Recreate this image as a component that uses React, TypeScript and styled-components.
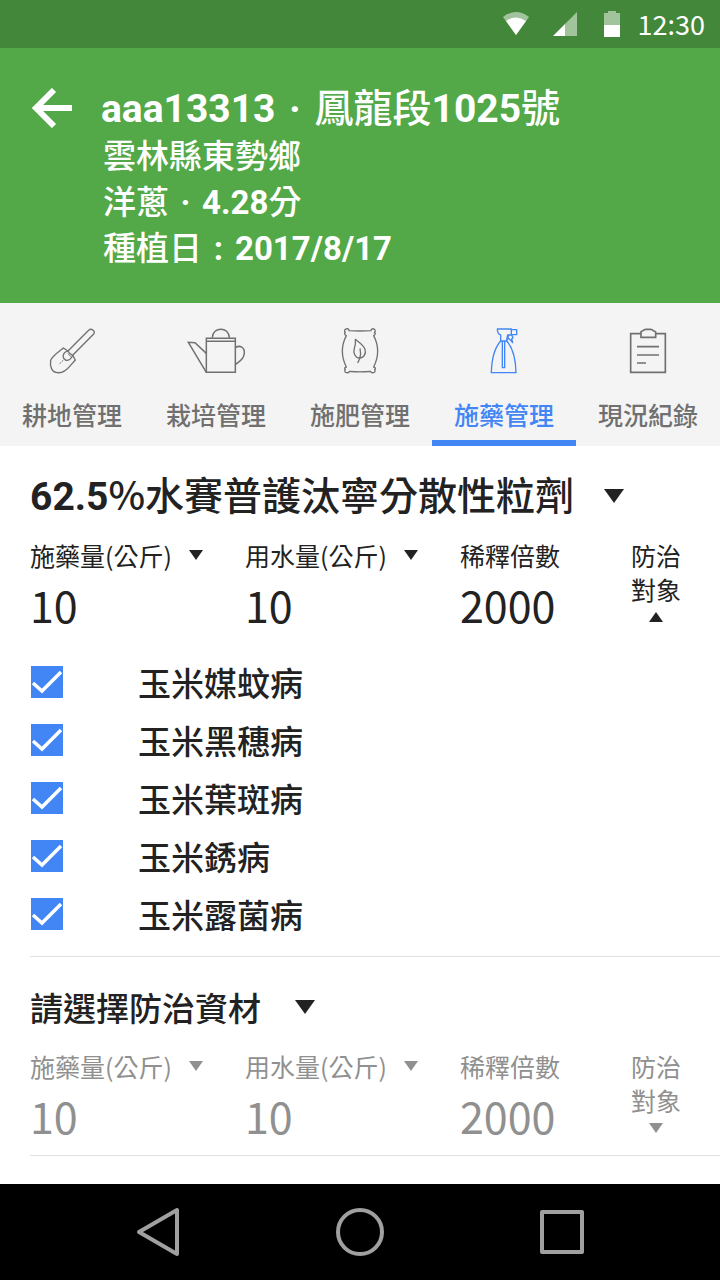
import React, { useState } from "react";
import styled, { createGlobalStyle, css } from "styled-components";

const colors = {
  statusBar: "#43883a",
  header: "#53a848",
  tabs: "#f4f4f4",
  tabText: "#707070",
  accent: "#4285f4",
  text: "#222222",
  muted: "#909090",
  divider: "#e0e0e0",
};

const cjk = `"Noto Sans CJK TC", sans-serif`;
const latinFirst = `Roboto, "Noto Sans CJK TC", sans-serif`;

const GlobalStyle = createGlobalStyle`
  *, *::before, *::after { box-sizing: border-box; }
  body {
    margin: 0;
    background: #ffffff;
    color: ${colors.text};
    font-family: ${cjk};
  }
  button, input, select { font: inherit; color: inherit; }
`;

const plainControl = css`
  appearance: none;
  margin: 0;
  padding: 0;
  border: 0;
  border-radius: 0;
  background: none;
`;

const Screen = styled.div`
  display: flex;
  flex-direction: column;
  min-height: 100vh;
`;

const StatusBar = styled.div`
  display: flex;
  align-items: center;
  justify-content: flex-end;
  height: 48px;
  padding-right: 15px;
  background: ${colors.statusBar};
  color: #ffffff;
  font-size: 27px;
  line-height: 48px;
`;

const StatusIcons = styled.div`
  display: flex;
  align-items: center;
  gap: 24px;
  margin-right: 17px;
  svg { display: block; }
`;

const Header = styled.header`
  display: flex;
  align-items: flex-start;
  gap: 26px;
  padding: 31px 32px 34px 30px;
  background: ${colors.header};
  color: #ffffff;
`;

const BackButton = styled.button`
  ${plainControl}
  display: flex;
  align-items: center;
  height: 58px;
  cursor: pointer;
`;

const HeaderText = styled.div`
  font-size: 33px;
  font-weight: 500;
  line-height: 46px;
`;

const FieldName = styled.h1`
  margin: 0;
  font-size: 39px;
  font-weight: 500;
  line-height: 52px;
`;

const HeaderLine = styled.p`
  margin: 0;
  padding-left: 2px;
`;

const Latin = styled.span`
  font-family: ${latinFirst};
  font-weight: 700;
  line-height: 1;
`;

const Mark = styled(Latin)`
  display: inline-block;
  width: 1em;
  text-align: center;
`;

const TabBar = styled.div`
  display: grid;
  grid-template-columns: repeat(5, 1fr);
  background: ${colors.tabs};
`;

const Tab = styled.button<{ $active: boolean }>`
  ${plainControl}
  display: flex;
  flex-direction: column;
  align-items: center;
  gap: 21px;
  height: 143px;
  padding-top: 24px;
  border-bottom: 6px solid ${(p) => (p.$active ? colors.accent : "transparent")};
  color: ${(p) => (p.$active ? colors.accent : colors.tabText)};
  font-size: 25px;
  font-weight: 500;
  line-height: 36px;
  cursor: pointer;
`;

const Main = styled.main`
  flex: 1;
  padding-left: 30px;
`;

const Section = styled.section<{ $muted?: boolean }>`
  padding-top: 23px;
  padding-bottom: ${(p) => (p.$muted ? 10 : 13)}px;
  border-bottom: 1px solid ${colors.divider};
`;

const ProductButton = styled.button`
  ${plainControl}
  display: flex;
  align-items: center;
  gap: 30px;
  height: 54px;
  font-size: 39px;
  font-weight: 500;
  line-height: 48px;
  cursor: pointer;
`;

const ProductName = styled.span`
  padding-bottom: 6px;
`;

const Picker = styled.span<{ $gap: number }>`
  display: inline-grid;
  align-items: center;
  > select {
    grid-area: 1 / 1;
    padding-right: ${(p) => p.$gap}px;
  }
  > svg {
    grid-area: 1 / 1;
    justify-self: end;
    pointer-events: none;
  }
`;

const ProductSelect = styled.select`
  ${plainControl}
  height: 54px;
  font-size: 33px;
  font-weight: 500;
  cursor: pointer;
`;

const UnitSelect = styled.select`
  ${plainControl}
  height: 34px;
  font-size: 25px;
  cursor: pointer;
`;

const Fields = styled.div<{ $muted?: boolean }>`
  display: grid;
  grid-template-columns: 215fr 215fr 171fr 89fr;
  align-items: start;
  margin-top: 15px;
  color: ${(p) => (p.$muted ? colors.muted : colors.text)};
  font-size: 25px;
  line-height: 34px;
`;

const Field = styled.div`
  display: flex;
  flex-direction: column;
  align-items: flex-start;
  gap: 2px;
  min-width: 0;
`;

const ValueInput = styled.input`
  ${plainControl}
  width: 100%;
  height: 60px;
  font-size: 43px;
`;

const TargetButton = styled.button`
  ${plainControl}
  display: flex;
  flex-direction: column;
  align-items: center;
  justify-self: start;
  gap: 6px;
  line-height: 34px;
  cursor: pointer;
`;

const TargetText = styled.span`
  width: 50px;
`;

const TargetList = styled.ul`
  margin: 0;
  padding: 19px 0 0;
  list-style: none;
`;

const TargetRow = styled.label`
  display: flex;
  align-items: center;
  gap: 75px;
  height: 58px;
  padding-left: 1px;
  font-size: 33px;
  font-weight: 500;
  line-height: 58px;
  cursor: pointer;
`;

const CheckBox = styled.span`
  display: grid;
  > * { grid-area: 1 / 1; }
  > svg { pointer-events: none; }
  > input:not(:checked) + svg { visibility: hidden; }
`;

const CheckInput = styled.input`
  ${plainControl}
  width: 32px;
  height: 32px;
  border: 2px solid ${colors.accent};
  cursor: pointer;
  &:checked { background: ${colors.accent}; }
`;

const NavBar = styled.nav`
  display: flex;
  justify-content: center;
  height: 96px;
  background: #000000;
`;

const NavButton = styled.button`
  ${plainControl}
  display: flex;
  align-items: center;
  justify-content: center;
  width: 28%;
  cursor: pointer;
`;

const Arrow = ({ large, up }: { large?: boolean; up?: boolean }) => (
  <svg width={large ? 20 : 14} height={large ? 14 : 10} viewBox="0 0 14 10" aria-hidden="true" preserveAspectRatio="none">
    <path d={up ? "M0 10 7 0l7 10z" : "M0 0h14L7 10z"} fill="currentColor" />
  </svg>
);

const iconProps = {
  width: 60,
  height: 48,
  fill: "none",
  stroke: "currentColor",
  strokeLinejoin: "round" as const,
  "aria-hidden": true,
};

const ShovelIcon = () => (
  <svg {...iconProps} viewBox="126 80 180 144" strokeWidth="4">
    <path d="M204 152 266 90C273 82 288 92 281 101L218 165" />
    <path d="M204 152 190 143C178 153 158 166 152 180C149 198 155 216 172 217C190 220 202 207 211 196L226 179 218 165" />
    <path d="M204 152C207 158 211 162 218 165C214 176 205 182 196 179C188 175 188 164 193 158C197 154 200 154 204 152Z" />
    <path d="M203 159 213 169" strokeWidth="3" />
    <path d="M196 174 178 191" strokeDasharray="6 3" strokeWidth="3" />
  </svg>
);

const WateringCanIcon = () => (
  <svg {...iconProps} viewBox="558 80 180 144" strokeWidth="4.5" strokeLinejoin="miter">
    <path d="M619 114H706V216H619ZM619 123H706" />
    <path d="M637 112C638 78 687 78 688 112" />
    <path d="M619 159 585 127 565 126 619 216" />
    <path d="M706 142C720 133 734 141 733 158C732 178 716 185 706 193" />
  </svg>
);

const FertilizerIcon = () => (
  <svg {...iconProps} viewBox="120 80 180 144" strokeWidth="4">
    <path d="M177 91Q210 93 243 91C243 85 250 84 253 87C257 90 256 95 253 97C258 98 256 103 251 106Q275 152 251 200C257 202 258 206 254 208C257 213 254 217 250 217C246 218 243 217 242 213Q210 216 178 213C177 217 174 218 170 217C165 217 163 212 166 208C162 206 163 202 169 200Q145 152 169 106C163 103 162 98 166 97C162 93 164 87 168 86C173 84 177 86 177 91Z" />
    <path d="M196 117Q198 132 193 144C189 158 195 171 207 173C222 173 229 160 225 147C220 133 208 127 196 117Z" />
    <path d="M210 144Q214 160 209 175L203 188" />
  </svg>
);

const SprayIcon = () => (
  <svg {...iconProps} viewBox="552 80 180 144" strokeWidth="4">
    <path d="M632 122V104C626 102 622 97 622 86H664V104H653Q651 112 650 122Z" />
    <path d="M664 88H680V103H664M656 104 653 112 662 120 668 127 665 116 669 112 665 104M650 118 657 112" />
    <path d="M632 122C616 140 605 175 604 217H678C677 175 667 140 650 122" />
    <path d="M637 122V202H644V122" />
  </svg>
);

const RecordIcon = () => (
  <svg {...iconProps} viewBox="174 80 180 144" strokeWidth="5" strokeLinejoin="miter">
    <path d="M242 100H212V216H316V100H287" />
    <path d="M243 111V94Q244 92 248 92Q252 87 258 87H271Q277 87 281 92Q286 92 287 95V111Z" />
    <path d="M231 139H297M231 164H297M231 188H258" />
  </svg>
);

const tabs = [
  { name: "耕地管理", Icon: ShovelIcon },
  { name: "栽培管理", Icon: WateringCanIcon },
  { name: "施肥管理", Icon: FertilizerIcon },
  { name: "施藥管理", Icon: SprayIcon },
  { name: "現況紀錄", Icon: RecordIcon },
];

const diseases = ["玉米媒蚊病", "玉米黑穗病", "玉米葉斑病", "玉米銹病", "玉米露菌病"];

type DosageProps = { id: string; muted?: boolean; open: boolean; onToggle: () => void };

const DosageFields = ({ id, muted, open, onToggle }: DosageProps) => (
  <Fields $muted={muted}>
    {["施藥量", "用水量"].map((name) => (
      <Field key={name}>
        <Picker $gap={31}>
          <UnitSelect aria-label={`${name}單位`}>
            <option>{`${name}(公斤)`}</option>
          </UnitSelect>
          <Arrow />
        </Picker>
        <ValueInput aria-label={name} inputMode="numeric" defaultValue="10" />
      </Field>
    ))}
    <Field>
      <label htmlFor={`${id}-ratio`}>稀釋倍數</label>
      <ValueInput id={`${id}-ratio`} inputMode="numeric" defaultValue="2000" />
    </Field>
    <TargetButton type="button" aria-expanded={open} onClick={onToggle}>
      <TargetText>防治對象</TargetText>
      <Arrow up={open} />
    </TargetButton>
  </Fields>
);

const DiseaseList = () => (
  <TargetList>
    {diseases.map((name) => (
      <li key={name}>
        <TargetRow>
          <CheckBox>
            <CheckInput type="checkbox" defaultChecked />
            <svg width="32" height="32" viewBox="0 0 32 32" fill="none" stroke="#ffffff" strokeWidth="3.5" aria-hidden="true">
              <path d="M2 17 11 25 30 6" />
            </svg>
          </CheckBox>
          {name}
        </TargetRow>
      </li>
    ))}
  </TargetList>
);

export default function App() {
  const [activeTab, setActiveTab] = useState(3);
  const [firstOpen, setFirstOpen] = useState(true);
  const [secondOpen, setSecondOpen] = useState(false);

  return (
    <Screen>
      <GlobalStyle />
      <StatusBar>
        <StatusIcons>
          <svg width="26" height="24" viewBox="0 0 26 24" fill="#ffffff" aria-hidden="true">
            <path d="M0 5Q13-5 26 5L13 23z" opacity=".5" />
            <path d="M3 9Q13 2 23 9L13 23z" />
          </svg>
          <svg width="24" height="24" viewBox="0 0 24 24" fill="#ffffff" aria-hidden="true">
            <path d="M24 0V24H12V12z" opacity=".5" />
            <path d="M12 12V24H0z" />
          </svg>
          <svg width="20" height="26" viewBox="-3 0 20 26" fill="#ffffff" aria-hidden="true">
            <path d="M0 2H4V0H12V2H16V14H0z" opacity=".5" />
            <path d="M0 14H16V26H0z" />
          </svg>
        </StatusIcons>
        <time>12:30</time>
      </StatusBar>

      <Header>
        <BackButton type="button" aria-label="返回">
          <svg width="45" height="40" viewBox="0 0 45 40" fill="none" stroke="#ffffff" strokeWidth="6" aria-hidden="true">
            <path d="M24 2 6 20 24 38M6 20H42" />
          </svg>
        </BackButton>
        <HeaderText>
          <FieldName>
            <Latin>aaa13313</Latin>
            <Mark>·</Mark>鳳龍段<Latin>1025</Latin>號
          </FieldName>
          <HeaderLine>雲林縣東勢鄉</HeaderLine>
          <HeaderLine>
            洋蔥<Mark>·</Mark>
            <Latin>4.28</Latin>分
          </HeaderLine>
          <HeaderLine>
            種植日<Mark>:</Mark>
            <Latin>2017/8/17</Latin>
          </HeaderLine>
        </HeaderText>
      </Header>

      <TabBar role="tablist">
        {tabs.map(({ name, Icon }, i) => (
          <Tab
            key={name}
            type="button"
            role="tab"
            aria-selected={i === activeTab}
            $active={i === activeTab}
            onClick={() => setActiveTab(i)}
          >
            <Icon />
            {name}
          </Tab>
        ))}
      </TabBar>

      <Main>
        <Section>
          <ProductButton type="button" aria-haspopup="listbox">
            <ProductName>
              <Latin>62.5</Latin>%水賽普護汰寧分散性粒劑
            </ProductName>
            <Arrow large />
          </ProductButton>
          <DosageFields id="first" open={firstOpen} onToggle={() => setFirstOpen(!firstOpen)} />
          {firstOpen && <DiseaseList />}
        </Section>

        <Section $muted>
          <Picker $gap={54}>
            <ProductSelect aria-label="防治資材">
              <option>請選擇防治資材</option>
            </ProductSelect>
            <Arrow large />
          </Picker>
          <DosageFields id="second" muted open={secondOpen} onToggle={() => setSecondOpen(!secondOpen)} />
          {secondOpen && <DiseaseList />}
        </Section>
      </Main>

      <NavBar aria-label="系統導覽">
        <NavButton type="button" aria-label="上一頁">
          <svg width="44" height="50" viewBox="0 0 44 50" fill="none" stroke="#a0a0a0" strokeWidth="4" strokeLinejoin="round" aria-hidden="true">
            <path d="M41 3V47L3 25z" />
          </svg>
        </NavButton>
        <NavButton type="button" aria-label="主畫面">
          <svg width="50" height="50" viewBox="0 0 50 50" fill="none" stroke="#a0a0a0" strokeWidth="4" aria-hidden="true">
            <circle cx="25" cy="25" r="22" />
          </svg>
        </NavButton>
        <NavButton type="button" aria-label="最近使用">
          <svg width="46" height="46" viewBox="0 0 46 46" fill="none" stroke="#a0a0a0" strokeWidth="4" strokeLinejoin="round" aria-hidden="true">
            <path d="M3 3H43V43H3z" />
          </svg>
        </NavButton>
      </NavBar>
    </Screen>
  );
}
